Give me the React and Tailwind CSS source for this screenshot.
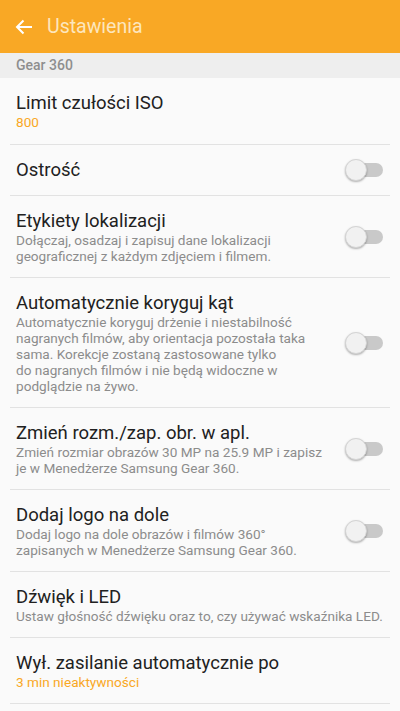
import React, { useState } from 'react';

const items = [
  { title: 'Limit czułości ISO', value: '800' },
  { title: 'Ostrość', toggle: true },
  {
    title: 'Etykiety lokalizacji',
    desc: ['Dołączaj, osadzaj i zapisuj dane lokalizacji geograficznej z każdym zdjęciem i filmem.'],
    toggle: true,
  },
  {
    title: 'Automatycznie koryguj kąt',
    desc: [
      'Automatycznie koryguj drżenie i niestabilność nagranych filmów, aby orientacja pozostała taka sama. Korekcje zostaną zastosowane tylko',
      'do nagranych filmów i nie będą widoczne w podglądzie na żywo.',
    ],
    toggle: true,
  },
  {
    title: 'Zmień rozm./zap. obr. w apl.',
    desc: ['Zmień rozmiar obrazów 30 MP na 25.9 MP i zapisz je w Menedżerze Samsung Gear 360.'],
    toggle: true,
  },
  {
    title: 'Dodaj logo na dole',
    desc: ['Dodaj logo na dole obrazów i filmów 360° zapisanych w Menedżerze Samsung Gear 360.'],
    toggle: true,
  },
  { title: 'Dźwięk i LED', desc: ['Ustaw głośność dźwięku oraz to, czy używać wskaźnika LED.'] },
  { title: 'Wył. zasilanie automatycznie po', value: '3 min nieaktywności', tight: true },
];

function Toggle({ on, onClick }) {
  return (
    <button onClick={onClick} className="relative block w-[38px] h-[22px] shrink-0">
      <span
        className={`absolute right-0 top-[4px] w-[30px] h-[14px] rounded-full ${on ? 'bg-[#fbd38d]' : 'bg-[#c9c9c9]'}`}
      />
      <span
        className={`absolute top-0 w-[22px] h-[22px] rounded-full border border-[#d4d4d4] shadow-[0_1px_2px_rgba(0,0,0,0.3)] ${on ? 'right-0 bg-[#f9a825]' : 'left-0 bg-[#f1f1f1]'}`}
      />
    </button>
  );
}

export default function App() {
  const [toggles, setToggles] = useState({});

  return (
    <div className="w-[400px] h-[711px] overflow-hidden bg-[#fafafa] font-['Roboto',sans-serif]">
      <div className="h-[53px] bg-[#f9a825] flex items-center pl-[15px]">
        <svg width="18" height="16" viewBox="0 0 18 16" fill="none" stroke="#ffffff" strokeWidth="2">
          <path d="M17 8H2M8.5 1.5L2 8l6.5 6.5" />
        </svg>
        <span className="ml-[14px] text-[19.5px] text-[#fde6bd]">Ustawienia</span>
      </div>
      <div className="h-[25px] bg-[#eeeeee] flex items-center px-4 text-[14px] font-medium text-[#8e8e8e]">
        Gear 360
      </div>
      {items.map((item, i) => (
        <div key={i} className="border-b border-[#e2e2e2] mx-[10px]">
          <div className={`flex items-center pt-[14px] px-[6px] ${item.desc || item.tight ? 'pb-[13px]' : 'pb-[14px]'}`}>
            <div className={`flex-1 ${item.toggle ? 'pr-[12px]' : ''}`}>
              <div className="text-[18.5px] leading-[22px] text-[#212121]">{item.title}</div>
              {item.desc && (
                <div className={`text-[13.6px] leading-[16px] text-[#8c8c8c] ${item.toggle ? 'max-w-[310px]' : ''}`}>
                  {item.desc.map((part, j) => (
                    <div key={j}>{part}</div>
                  ))}
                </div>
              )}
              {item.value && (
                <div className="text-[13.6px] leading-[16px] text-[#f9a825]">{item.value}</div>
              )}
            </div>
            {item.toggle && (
              <div className="flex pr-[1px]">
                <Toggle
                  on={!!toggles[i]}
                  onClick={() => setToggles((t) => ({ ...t, [i]: !t[i] }))}
                />
              </div>
            )}
          </div>
        </div>
      ))}
    </div>
  );
}
